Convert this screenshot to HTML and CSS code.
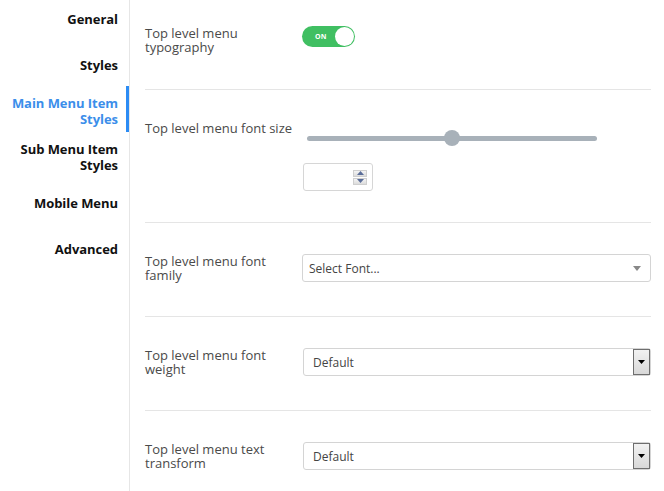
FILE: index.html
```html
<!DOCTYPE html>
<html>
<head>
<meta charset="utf-8">
<link rel="stylesheet" href="styles.css">
</head>
<body>
<div class="layout">
  <aside class="sidebar">
    <nav class="nav">
      <div class="nav-item">General</div>
      <div class="nav-item">Styles</div>
      <div class="nav-item active">Main Menu Item<br>Styles</div>
      <div class="nav-item">Sub Menu Item<br>Styles</div>
      <div class="nav-item">Mobile Menu</div>
      <div class="nav-item">Advanced</div>
    </nav>
  </aside>
  <main class="content">
    <div class="row row-first">
      <div class="label">Top level menu typography</div>
      <div class="control">
        <div class="toggle"><span class="toggle-text">ON</span><span class="knob"></span></div>
      </div>
    </div>
    <div class="row row-slider">
      <div class="label">Top level menu font size</div>
      <div class="control control-col">
        <div class="slider"><div class="track"></div><div class="thumb"></div></div>
        <div class="number">
          <div class="spinner">
            <div class="spin-btn"><svg width="7" height="4" viewBox="0 0 7 4"><path d="M0 4 L3.5 0 L7 4Z" fill="#5a6d99"/></svg></div>
            <div class="spin-btn"><svg width="7" height="4" viewBox="0 0 7 4"><path d="M0 0 L3.5 4 L7 0Z" fill="#5a6d99"/></svg></div>
          </div>
        </div>
      </div>
    </div>
    <div class="row">
      <div class="label">Top level menu font family</div>
      <div class="control">
        <div class="select select-font"><span>Select Font...</span><svg class="caret" width="8" height="5" viewBox="0 0 8 5"><path d="M0 0 L8 0 L4 5Z" fill="#888"/></svg></div>
      </div>
    </div>
    <div class="row">
      <div class="label">Top level menu font weight</div>
      <div class="control">
        <div class="select select-native"><span>Default</span><div class="drop-btn"><svg width="7" height="4" viewBox="0 0 7 4"><path d="M0 0 L7 0 L3.5 4Z" fill="#000"/></svg></div></div>
      </div>
    </div>
    <div class="row row-last">
      <div class="label">Top level menu text transform</div>
      <div class="control">
        <div class="select select-native"><span>Default</span><div class="drop-btn"><svg width="7" height="4" viewBox="0 0 7 4"><path d="M0 0 L7 0 L3.5 4Z" fill="#000"/></svg></div></div>
      </div>
    </div>
  </main>
</div>
</body>
</html>
```
FILE: styles.css
```css
* { box-sizing: border-box; }
html, body { margin: 0; padding: 0; background: #fff; }
body {
  font-family: "Open Sans", "Noto Sans", sans-serif;
  color: #444;
  width: 664px;
  height: 491px;
  overflow: hidden;
}
.layout { display: flex; height: 491px; }
.sidebar {
  width: 130px;
  flex: none;
  border-right: 1px solid #e6e6e6;
}
.nav { margin-top: -6px; display: flex; flex-direction: column; }
.nav-item {
  height: 46px;
  padding-top: 4px;
  padding-right: 11px;
  display: flex;
  align-items: center;
  justify-content: flex-end;
  text-align: right;
  font-weight: 700;
  font-size: 13px;
  line-height: 16px;
  color: #111;
  letter-spacing: -0.05px;
}
.nav-item.active {
  color: #3b8eea;
  border-right: 3px solid #2c8cf4;
  padding-right: 8px;
}
.content {
  flex: 1;
  padding: 0 13px 0 15px;
}
.row {
  display: flex;
  align-items: flex-start;
  padding: 31px 0 34px;
  border-bottom: 1px solid #e5e5e5;
}
.row-first { padding-top: 26px; padding-bottom: 35px; }
.row-slider { padding-bottom: 31px; }
.row-last { border-bottom: none; }
.label {
  width: 157px;
  min-height: 28px;
  flex: none;
  padding-right: 7px;
  font-size: 13px;
  line-height: 14px;
  color: #4a4a4a;
}
.control { flex: 1; }
.control-col { display: flex; flex-direction: column; }
.toggle {
  width: 53px;
  height: 21px;
  border-radius: 11px;
  background: #40bf62;
  position: relative;
  display: flex;
  align-items: center;
}
.toggle-text {
  font-size: 7px;
  font-weight: 700;
  color: #fff;
  margin-left: 13px;
  letter-spacing: 0.2px;
}
.knob {
  position: absolute;
  right: 1px;
  top: 1px;
  width: 19px;
  height: 19px;
  border-radius: 50%;
  background: #fff;
}
.slider {
  position: relative;
  height: 34px;
  margin-left: 5px;
  width: 290px;
}
.track {
  position: absolute;
  left: 0; right: 0;
  top: 15px;
  height: 5px;
  border-radius: 3px;
  background: #a8b1b9;
}
.thumb {
  position: absolute;
  left: 137px;
  top: 9px;
  width: 16px;
  height: 16px;
  border-radius: 50%;
  background: #a8b1b9;
}
.number {
  margin-top: 8px;
  margin-left: 1px;
  width: 70px;
  height: 28px;
  border: 1px solid #d6d6d6;
  border-radius: 3px;
  display: flex;
  align-items: center;
  justify-content: flex-end;
  padding-right: 5px;
}
.spinner {
  width: 14px;
  height: 15px;
  display: flex;
  flex-direction: column;
  gap: 1px;
}
.spin-btn {
  flex: 1;
  background: linear-gradient(#f4f4f4, #dcdcdc);
  border: 1px solid #cfcfcf;
  display: flex;
  align-items: center;
  justify-content: center;
}
.select {
  height: 28px;
  border: 1px solid #d4d4d4;
  border-radius: 3px;
  display: flex;
  align-items: center;
  font-size: 12px;
  color: #444;
  background: #fff;
}
.select-font {
  padding-left: 6px;
  padding-right: 9px;
  justify-content: space-between;
}
.select-native {
  margin-left: 1px;
  padding-left: 9px;
  justify-content: space-between;
  padding-right: 0;
}
.drop-btn {
  width: 17px;
  height: 26px;
  border: 1px solid #6e6e6e;
  background: linear-gradient(#f2f2f2, #d8d8d8);
  display: flex;
  align-items: center;
  justify-content: center;
}
```
